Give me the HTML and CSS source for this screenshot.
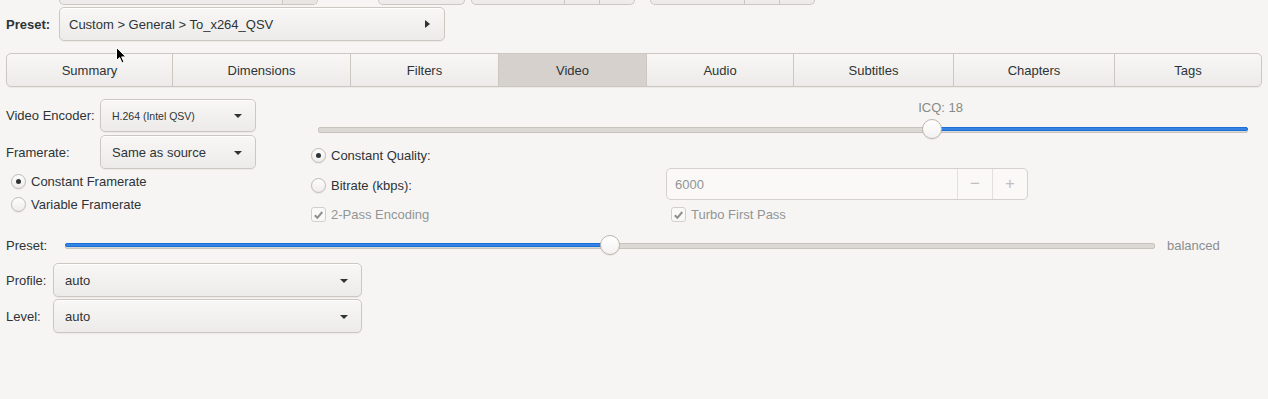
FILE: index.html
```html
<!DOCTYPE html>
<html>
<head>
<meta charset="utf-8">
<link rel="stylesheet" href="styles.css">
</head>
<body>
<div class="toprow">
  <div class="tbox tb1"><span class="tseg grow"></span><span class="tseg dark w35"></span></div>
  <div class="tbox tb2"><span class="tseg grow"></span></div>
  <div class="tbox tb3"><span class="tseg grow"></span><span class="tseg w35"></span><span class="tseg w35"></span></div>
  <div class="tbox tb4"><span class="tseg grow"></span><span class="tseg w35"></span><span class="tseg w35"></span></div>
</div>

<div class="preset-row">
  <span class="preset-label">Preset:</span>
  <div class="btn preset-btn">
    <span>Custom &gt; General &gt; To_x264_QSV</span>
    <span class="arrow-right"></span>
  </div>
</div>

<div class="tabs">
  <div class="tab">Summary</div>
  <div class="tab">Dimensions</div>
  <div class="tab">Filters</div>
  <div class="tab active">Video</div>
  <div class="tab">Audio</div>
  <div class="tab">Subtitles</div>
  <div class="tab">Chapters</div>
  <div class="tab">Tags</div>
</div>

<div class="video">
  <div class="main">
    <div class="left">
      <div class="lrow first">
        <span class="lbl">Video Encoder:</span>
        <div class="btn combo small"><span>H.264 (Intel QSV)</span><span class="arrow-down"></span></div>
      </div>
      <div class="lrow">
        <span class="lbl">Framerate:</span>
        <div class="btn combo"><span>Same as source</span><span class="arrow-down"></span></div>
      </div>
      <div class="opt indent first-opt"><span class="radio on"></span><span>Constant Framerate</span></div>
      <div class="opt indent"><span class="radio"></span><span>Variable Framerate</span></div>
    </div>

    <div class="right">
      <div class="scale icq">
        <span class="scale-val" style="left:66%">ICQ: 18</span>
        <div class="track">
          <div class="fill fill-right" style="left:66%"></div>
          <div class="knob" style="left:66%"></div>
        </div>
      </div>
      <div class="opt cq"><span class="radio on"></span><span>Constant Quality:</span></div>
      <div class="rgrid">
        <div class="opt bitrate"><span class="radio"></span><span>Bitrate (kbps):</span></div>
        <div class="spin">
          <span class="spin-text">6000</span>
          <span class="spin-btn">&minus;</span>
          <span class="spin-btn">+</span>
        </div>
        <div class="opt chk-row dis"><span class="check"><svg viewBox="0 0 14 14" width="14" height="14"><path d="M3 7.2 L5.8 10 L11 3.8" fill="none" stroke="#8d9091" stroke-width="2.2"/></svg></span><span>2-Pass Encoding</span></div>
        <div class="opt chk-row dis turbo"><span class="check"><svg viewBox="0 0 14 14" width="14" height="14"><path d="M3 7.2 L5.8 10 L11 3.8" fill="none" stroke="#8d9091" stroke-width="2.2"/></svg></span><span>Turbo First Pass</span></div>
      </div>
    </div>
  </div>

  <div class="speed-row">
    <span class="lbl">Preset:</span>
    <div class="scale plain">
      <div class="track">
        <div class="fill fill-left" style="width:50%"></div>
        <div class="knob" style="left:50%"></div>
      </div>
    </div>
    <span class="speed-val">balanced</span>
  </div>

  <div class="pl-grid">
    <span class="lbl">Profile:</span>
    <div class="btn combo wide"><span>auto</span><span class="arrow-down"></span></div>
    <span class="lbl">Level:</span>
    <div class="btn combo wide"><span>auto</span><span class="arrow-down"></span></div>
  </div>
</div>

<svg class="cursor" width="12" height="18" viewBox="0 0 12 18"><path d="M0.5 0.5 L0.5 13.5 L3.6 10.6 L6 16 L8 15.1 L5.7 9.9 L9.8 9.9 Z" fill="#000" stroke="#fff" stroke-width="1"/></svg>
</body>
</html>
```

FILE: styles.css
```css
* { box-sizing: border-box; }
html, body { margin: 0; padding: 0; }
body {
  background: #f6f5f4;
  font-family: "Liberation Sans", Arial, sans-serif;
  font-size: 13px;
  color: #2e3436;
  width: 1268px;
  height: 399px;
  overflow: hidden;
  position: relative;
}

/* clipped toolbar on top */
.toprow {
  height: 5px;
  overflow: hidden;
  display: flex;
  align-items: flex-end;
  padding-left: 59px;
}
.tbox {
  height: 30px;
  display: flex;
  border: 1px solid #cdc7c2;
  border-top: 0;
  border-radius: 0 0 5px 5px;
  background: linear-gradient(to bottom, #f6f5f4, #edebe9);
  flex: none;
}
.tb1 { width: 259px; }
.tb2 { width: 87px; margin-left: 60px; }
.tb3 { width: 164px; margin-left: 6px; }
.tb4 { width: 165px; margin-left: 15px; }
.tseg { height: 100%; }
.tseg.grow { flex: 1; }
.tseg.w35 { width: 35px; border-left: 1px solid #cdc7c2; }
.tseg.dark { background: #e8e6e3; border-radius: 0 0 4px 0; }

/* buttons */
.btn {
  border: 1px solid #cdc7c2;
  border-radius: 5px;
  background: linear-gradient(to bottom, #f8f7f6, #edebe9);
  box-shadow: inset 0 1px rgba(255,255,255,0.8), 0 1px 1px rgba(0,0,0,0.05);
  display: flex;
  align-items: center;
  justify-content: space-between;
}

.preset-row {
  margin-top: 2px;
  height: 34px;
  display: grid;
  grid-template-columns: 53px 386px;
  align-items: center;
  padding-left: 6px;
}
.preset-label { font-weight: bold; }
.preset-btn {
  height: 34px;
  padding: 0 14px 0 9px;
}
.arrow-right {
  width: 0; height: 0;
  border-top: 4px solid transparent;
  border-bottom: 4px solid transparent;
  border-left: 5px solid #2e3436;
}
.arrow-down {
  width: 0; height: 0;
  border-left: 4px solid transparent;
  border-right: 4px solid transparent;
  border-top: 4px solid #2e3436;
  margin-top: 1px;
}

/* tabs */
.tabs {
  margin: 12px 6px 0;
  height: 34px;
  display: grid;
  grid-template-columns: 165px 178px 148px 148px 147px 160px 161px 147px;
  border: 1px solid #cdc7c2;
  border-radius: 5px;
  overflow: hidden;
  background: linear-gradient(to bottom, #f8f7f6, #edebe9);
  box-shadow: 0 1px 1px rgba(0,0,0,0.05);
}
.tab {
  display: flex;
  align-items: center;
  justify-content: center;
  border-left: 1px solid #cdc7c2;
}
.tab:first-child { border-left: 0; }
.tab.active { background: #d6d1cd; }

/* video pane */
.video { padding: 12px 6px 0; }
.main {
  display: grid;
  grid-template-columns: 250px 951px;
  column-gap: 55px;
  align-items: start;
}
.left { display: flex; flex-direction: column; }
.lrow {
  display: grid;
  grid-template-columns: 94px 156px;
  align-items: center;
  margin-top: 3px;
}
.lrow.first { margin-top: 0; }
.combo { height: 34px; padding: 0 13px 0 11px; }
.lrow.first .combo { height: 33px; }
.combo.small span:first-child { font-size: 10.5px; }

.opt {
  display: flex;
  align-items: center;
  height: 23px;
  gap: 5px;
}
.opt.indent { padding-left: 5px; }
.opt.first-opt { margin-top: 1px; }
.radio {
  width: 15px; height: 15px;
  border-radius: 50%;
  border: 1px solid #c0bab4;
  background: linear-gradient(to bottom, #fdfdfc, #efedeb);
  box-shadow: 0 1px 1px rgba(0,0,0,0.06);
  display: flex;
  align-items: center;
  justify-content: center;
  flex: none;
}
.radio.on::after {
  content: "";
  width: 5px; height: 5px;
  border-radius: 50%;
  background: #2e3436;
}

/* right column */
.right { display: flex; flex-direction: column; }
.scale { position: relative; }
.scale.icq { height: 40px; padding: 20px 14px 0 7px; }
.scale-val {
  position: absolute;
  top: 1px;
  line-height: 16px;
  transform: translateX(-50%);
  color: #888a85;
}
.scale.icq .scale-val { margin-left: 2px; }
.track {
  position: relative;
  height: 20px;
}
.track::before {
  content: "";
  position: absolute;
  left: 0; right: 0; top: 8px;
  height: 4px;
  border-radius: 2px;
  background: #dcd8d4;
  border: 1px solid #c9c3bd;
}
.fill {
  position: absolute;
  top: 8px;
  height: 4px;
  border-radius: 2px;
  background: #3584e4;
  border: 1px solid #1c6fd6;
}
.fill-right { right: 0; }
.fill-left { left: 0; }
.knob {
  position: absolute;
  top: 0;
  width: 20px; height: 20px;
  margin-left: -10px;
  border-radius: 50%;
  border: 1px solid #bdb6af;
  background: linear-gradient(to bottom, #ffffff, #f3f2f1);
  box-shadow: 0 1px 1px rgba(0,0,0,0.08);
}

.opt.cq { margin-top: 5px; height: 22px; padding-left: 0; }
.rgrid {
  display: grid;
  grid-template-columns: 355px 362px;
  margin-top: 2px;
  row-gap: 3px;
  align-items: center;
}
.opt.bitrate { padding-top: 2px; }
.spin {
  height: 32px;
  border: 1px solid #d5d0cc;
  border-radius: 5px;
  background: #faf9f8;
  display: flex;
  align-items: stretch;
}
.spin-text {
  flex: 1;
  display: flex;
  align-items: center;
  padding-left: 8px;
  color: #929595;
}
.spin-btn {
  width: 35px;
  border-left: 1px solid #e3dfdb;
  display: flex;
  align-items: center;
  justify-content: center;
  color: #c3c0bc;
  font-size: 17px;
}
.chk-row { height: 22px; }
.dis { color: #929595; }
.turbo { padding-left: 5px; }
.check {
  width: 15px; height: 15px;
  border: 1px solid #d3cec9;
  border-radius: 3px;
  background: #faf9f8;
  flex: none;
  display: flex;
}

/* preset speed slider */
.speed-row {
  margin-top: 10px;
  height: 20px;
  display: grid;
  grid-template-columns: 59px 1090px auto;
  align-items: center;
}
.speed-row .lbl, .speed-val { padding-top: 1px; }
.speed-row .scale { height: 20px; }
.speed-val { padding-left: 12px; color: #8b8e8f; }

.pl-grid {
  margin-top: 8px;
  display: grid;
  grid-template-columns: 47px 309px;
  row-gap: 2px;
  align-items: center;
}
.pl-grid .lbl { padding-top: 1px; }
.combo.wide { height: 34px; }

.cursor {
  position: absolute;
  left: 116px;
  top: 47px;
}
```
